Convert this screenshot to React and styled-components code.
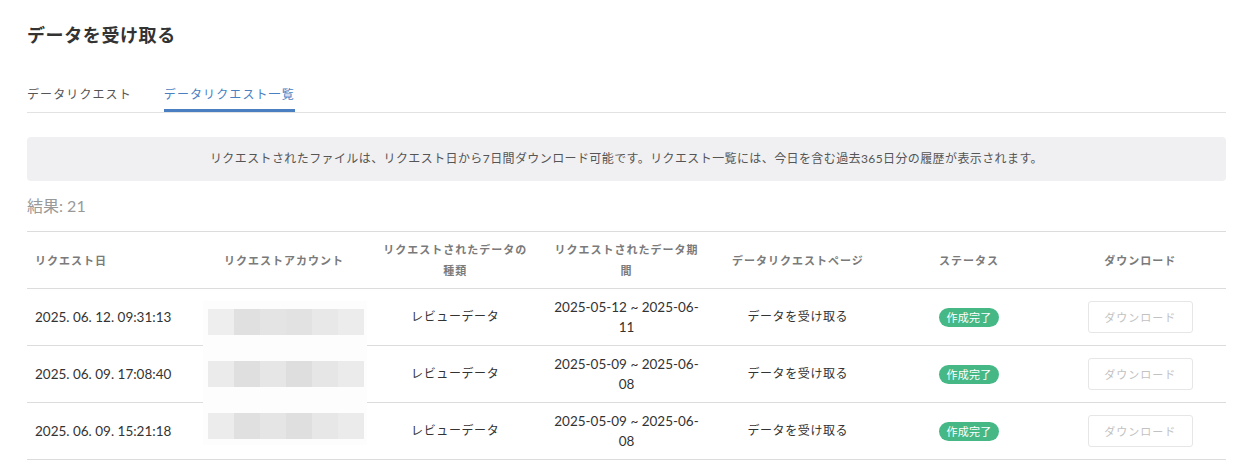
import React from "react";
import styled, { createGlobalStyle } from "styled-components";

const Global = createGlobalStyle`
  html, body { margin: 0; padding: 0; background: #fff; }
  body { font-family: Lato, "Noto Sans CJK JP", sans-serif; color: #333; }
  * { box-sizing: border-box; }
`;

const Page = styled.div`
  padding: 23px 15px 0 27px;
`;

const Title = styled.h1`
  margin: 0;
  font-size: 18px;
  line-height: 24px;
  font-weight: 700;
  letter-spacing: 0.6px;
  color: #333;
`;

const TabBar = styled.div`
  display: flex;
  gap: 32px;
  margin-top: 38px;
  border-bottom: 1px solid #e2e2e2;
`;

const Tab = styled.div`
  font-size: 12px;
  line-height: 20px;
  letter-spacing: 1.1px;
  padding-bottom: 4px;
  border-bottom: 3px solid ${(p) => (p.$active ? "#4a7fc2" : "transparent")};
  color: ${(p) => (p.$active ? "#4a7fc2" : "#555")};
`;

const Notice = styled.div`
  margin-top: 24px;
  background: #f0f0f2;
  border-radius: 4px;
  padding: 12px 16px;
  text-align: center;
  font-size: 12px;
  line-height: 20px;
  letter-spacing: 0.4px;
  color: #555;
`;

const Count = styled.div`
  margin-top: 15px;
  font-size: 16px;
  line-height: 20px;
  color: #999;
`;

const TableWrap = styled.div`
  position: relative;
  margin-top: 15px;
  border-top: 1px solid #dcdcdc;
`;

const Row = styled.div`
  display: grid;
  grid-template-columns: repeat(7, 1fr);
  align-items: center;
  min-height: 57px;
  border-bottom: 1px solid #dcdcdc;
`;

const HeadCell = styled.div`
  padding: 0 8px;
  font-size: 11px;
  line-height: 21px;
  font-weight: 700;
  letter-spacing: 1px;
  color: #7a7a7a;
  text-align: ${(p) => (p.$left ? "left" : "center")};
`;

const Cell = styled.div`
  padding: 0 8px;
  font-size: ${(p) => (p.$num ? "13.5px" : "12px")};
  line-height: 20px;
  letter-spacing: ${(p) => (p.$num ? "0" : "0.6px")};
  color: #333;
  text-align: ${(p) => (p.$left ? "left" : "center")};
  display: flex;
  justify-content: ${(p) => (p.$left ? "flex-start" : "center")};
`;

const Badge = styled.span`
  display: inline-block;
  background: #45b886;
  color: #fff;
  font-size: 11px;
  line-height: 19px;
  padding: 0 7px;
  border-radius: 10px;
  letter-spacing: 0.3px;
`;

const DownloadButton = styled.button`
  width: 105px;
  height: 32px;
  background: #fff;
  border: 1px solid #e6e6e6;
  border-radius: 3px;
  color: #c2c2c2;
  font-family: Lato, "Noto Sans CJK JP", sans-serif;
  font-size: 11px;
  letter-spacing: 1px;
  cursor: not-allowed;
  padding: 0;
`;

const Mosaic = styled.div`
  position: absolute;
  left: 176px;
  top: 69px;
  width: 164px;
  height: 144px;
  background: #fdfdfd;
  padding: 8px 3px 6px 5px;
  display: flex;
  flex-direction: column;
  gap: 26px;
`;

const Strip = styled.div`
  display: flex;
`;

const Tile = styled.div`
  width: 26px;
  height: 26px;
`;

const tiles = [
  ["#eeeeee", "#e0e0e0", "#e4e4e4", "#e2e2e2", "#e8e8e8", "#ececec"],
  ["#ebebeb", "#dfdfdf", "#e6e6e6", "#dedede", "#e6e6e6", "#ebebeb"],
  ["#ececec", "#e0e0e0", "#e5e5e5", "#dfdfdf", "#e7e7e7", "#ebebeb"],
];

const rows = [
  { date: "2025. 06. 12. 09:31:13", period: "2025-05-12 ~ 2025-06-11" },
  { date: "2025. 06. 09. 17:08:40", period: "2025-05-09 ~ 2025-06-08" },
  { date: "2025. 06. 09. 15:21:18", period: "2025-05-09 ~ 2025-06-08" },
];

export default function App() {
  return (
    <>
      <Global />
      <Page>
        <Title>データを受け取る</Title>
        <TabBar>
          <Tab>データリクエスト</Tab>
          <Tab $active>データリクエスト一覧</Tab>
        </TabBar>
        <Notice>
          リクエストされたファイルは、リクエスト日から7日間ダウンロード可能です。リクエスト一覧には、今日を含む過去365日分の履歴が表示されます。
        </Notice>
        <Count>結果: 21</Count>
        <TableWrap>
          <Row>
            <HeadCell $left>リクエスト日</HeadCell>
            <HeadCell>リクエストアカウント</HeadCell>
            <HeadCell>リクエストされたデータの種類</HeadCell>
            <HeadCell>リクエストされたデータ期間</HeadCell>
            <HeadCell>データリクエストページ</HeadCell>
            <HeadCell>ステータス</HeadCell>
            <HeadCell>ダウンロード</HeadCell>
          </Row>
          {rows.map((r, i) => (
            <Row key={i}>
              <Cell $left $num>{r.date}</Cell>
              <Cell />
              <Cell>レビューデータ</Cell>
              <Cell $num>{r.period}</Cell>
              <Cell>データを受け取る</Cell>
              <Cell>
                <Badge>作成完了</Badge>
              </Cell>
              <Cell>
                <DownloadButton disabled>ダウンロード</DownloadButton>
              </Cell>
            </Row>
          ))}
          <Mosaic>
            {tiles.map((strip, i) => (
              <Strip key={i}>
                {strip.map((c, j) => (
                  <Tile key={j} style={{ background: c }} />
                ))}
              </Strip>
            ))}
          </Mosaic>
        </TableWrap>
      </Page>
    </>
  );
}
